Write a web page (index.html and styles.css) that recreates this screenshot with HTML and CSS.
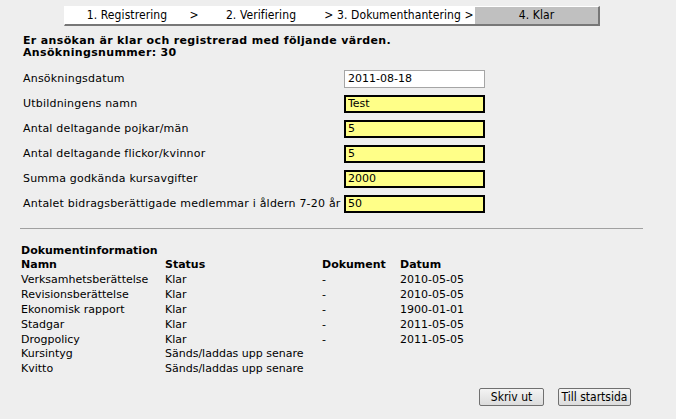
FILE: index.html
```html
<!DOCTYPE html>
<html>
<head>
  <title>Ansökan klar</title>
  <link rel="stylesheet" href="styles.css">
</head>
<body>
  <!-- Step indicator -->
  <div class="steps">
    <div class="step step-1">1. Registrering</div>
    <div class="step step-sep">&gt;</div>
    <div class="step step-2">2. Verifiering</div>
    <div class="step step-3">&gt; 3. Dokumenthantering &gt;</div>
    <div class="step step-4 active">4. Klar</div>
  </div>

  <div class="intro">
    <p>Er ansökan är klar och registrerad med följande värden.</p>
    <p>Ansökningsnummer: 30</p>
  </div>

  <!-- Registered values -->
  <div class="form">
    <div class="row">
      <label>Ansökningsdatum</label>
      <input type="text" class="field" value="2011-08-18" readonly>
    </div>
    <div class="row">
      <label>Utbildningens namn</label>
      <input type="text" class="field done" value="Test" readonly>
    </div>
    <div class="row">
      <label>Antal deltagande pojkar/män</label>
      <input type="text" class="field done" value="5" readonly>
    </div>
    <div class="row">
      <label>Antal deltagande flickor/kvinnor</label>
      <input type="text" class="field done" value="5" readonly>
    </div>
    <div class="row">
      <label>Summa godkända kursavgifter</label>
      <input type="text" class="field done" value="2000" readonly>
    </div>
    <div class="row">
      <label>Antalet bidragsberättigade medlemmar i åldern 7-20 år</label>
      <input type="text" class="field done" value="50" readonly>
    </div>
  </div>

  <hr class="divider">

  <!-- Document information -->
  <div class="docs">
    <div class="docs-title">Dokumentinformation</div>
    <table class="doc-table">
      <tr>
        <th class="col-name">Namn</th>
        <th class="col-status">Status</th>
        <th class="col-doc">Dokument</th>
        <th>Datum</th>
      </tr>
      <tr><td>Verksamhetsberättelse</td><td>Klar</td><td>-</td><td>2010-05-05</td></tr>
      <tr><td>Revisionsberättelse</td><td>Klar</td><td>-</td><td>2010-05-05</td></tr>
      <tr><td>Ekonomisk rapport</td><td>Klar</td><td>-</td><td>1900-01-01</td></tr>
      <tr><td>Stadgar</td><td>Klar</td><td>-</td><td>2011-05-05</td></tr>
      <tr><td>Drogpolicy</td><td>Klar</td><td>-</td><td>2011-05-05</td></tr>
      <tr><td>Kursintyg</td><td>Sänds/laddas upp senare</td><td></td><td></td></tr>
      <tr><td>Kvitto</td><td>Sänds/laddas upp senare</td><td></td><td></td></tr>
    </table>
  </div>

  <div class="buttons">
    <button class="btn btn-print">Skriv ut</button>
    <button class="btn btn-home">Till startsida</button>
  </div>
</body>
</html>
```

FILE: styles.css
```css
/* Page */
body {
  margin: 0;
  background-color: #eeeeee;
  font-family: "DejaVu Sans", Verdana, sans-serif;
  font-size: 11px;
  color: #000;
}
/* Step indicator */
.steps {
  display: flex;
  width: 533px;
  height: 17px;
  margin: 6px 0 0 64px;
  background-color: #fff;
  border-top: 1px solid #fff;
  border-left: 1px solid #fff;
  border-right: 2px solid #777;
  border-bottom: 2px solid #777;
  font-family: "DejaVu Sans Condensed", Tahoma, sans-serif;
  font-size: 12px;
  letter-spacing: 0.1px;
  line-height: 17px;
}
.step {
  text-align: center;
  white-space: nowrap;
}
.step-1 { width: 124px; }
.step-sep { width: 10px; }
.step-2 { width: 124px; }
.step-3 { width: 152px; }
.step-4 { flex: 1; }
.step.active {
  background-color: #c0c0c0;
}
/* Intro text */
.intro {
  margin: 9px 0 0 23px;
  font-weight: bold;
  letter-spacing: 0.35px;
}
.intro p {
  margin: 0;
  line-height: 12px;
}
/* Form rows */
.form {
  margin: 7px 0 0 23px;
}
.row {
  display: flex;
  align-items: center;
  height: 25px;
}
.row label {
  width: 321px;
  white-space: nowrap;
  letter-spacing: 0.2px;
}
.field {
  box-sizing: border-box;
  width: 141px;
  height: 18px;
  margin: 0;
  padding: 0 0 0 3px;
  border: 1px solid #a5a5a5;
  background-color: #fff;
  font-family: "DejaVu Sans", Verdana, sans-serif;
  font-size: 11px;
  color: #000;
}
.field.done {
  border: 2px solid #000;
  padding-left: 2px;
  background-color: #ffff88;
}
/* Divider */
.divider {
  width: 623px;
  margin: 12px 0 0 20px;
  border: none;
  border-top: 1px solid #a0a0a0;
  height: 0;
}
/* Documents */
.docs {
  margin: 14px 0 0 21px;
}
.docs-title {
  font-weight: bold;
  line-height: 15px;
}
.doc-table {
  border-collapse: collapse;
}
.doc-table th,
.doc-table td {
  padding: 0;
  text-align: left;
  line-height: 14.9px;
  white-space: nowrap;
  vertical-align: top;
}
.col-name { width: 144px; }
.col-status { width: 157px; }
.col-doc { width: 78px; }
/* Buttons */
.buttons {
  display: flex;
  gap: 14px;
  margin: 11px 0 0 479px;
}
.btn {
  height: 18px;
  padding: 0 6px;
  border: 1px solid #707070;
  border-radius: 2px;
  background: linear-gradient(#f4f4f4, #dcdcdc);
  font-family: "DejaVu Sans Condensed", Tahoma, sans-serif;
  font-size: 12px;
  line-height: 14px;
  color: #000;
}
.btn-print { width: 65px; }
.btn-home { width: 73px; padding: 0 1px; }
```
